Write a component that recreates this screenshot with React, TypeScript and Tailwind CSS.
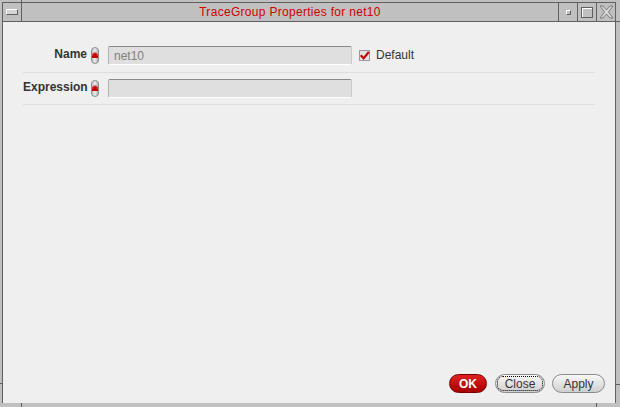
import React from "react";

const Pill = () => (
  <svg width="8" height="17" viewBox="0 0 8 17" className="shrink-0">
    <defs>
      <linearGradient id="pillg" x1="0" y1="0" x2="1" y2="0">
        <stop offset="0" stopColor="#b8b8b8" />
        <stop offset="0.5" stopColor="#ececec" />
        <stop offset="1" stopColor="#a8a8a8" />
      </linearGradient>
    </defs>
    <rect x="0.5" y="0.5" width="7" height="16" rx="3.5" fill="url(#pillg)" stroke="#8c8c8c" />
    <path d="M1 11 L1 9 A3 3.5 0 0 1 7 9 L7 11 Z" fill="#c40000" />
    <path d="M1.5 9 A2.5 3 0 0 1 6.5 9" fill="none" stroke="#ff6060" strokeWidth="0.6" />
  </svg>
);

const Field = ({ value }: { value?: string }) => (
  <div className="w-[244px] h-[19px] bg-[#dfdfdf] border-t border-t-[#8a8a8a] border-l border-l-[#b0b0b0] border-b border-b-white border-r border-r-[#c8c8c8] rounded-[2px] pl-[5px] flex items-center text-[12px] text-[#808080]">
    {value}
  </div>
);

const Row = ({ label, value, extra, cls }: { label: string; value?: string; extra?: React.ReactNode; cls: string }) => (
  <div className={`flex items-center border-b border-[#dedede] ${cls}`}>
    <div className="w-[64px] text-right font-bold text-[12px] leading-[14px] text-[#333] pb-[3px]">{label}</div>
    <div className="ml-[4px] mr-[9px] flex">
      <Pill />
    </div>
    <Field value={value} />
    {extra}
  </div>
);

export default function App() {
  return (
    <div
      className="relative w-[620px] h-[407px] bg-[#c0c0c0] pt-[2px] pl-[2px] pr-[4px] pb-[4px] flex flex-col"
      style={{ fontFamily: '"Liberation Sans", Arial, sans-serif' }}
    >
      <div className="flex-1 flex flex-col border-l border-t border-r border-[#606060]">
        {/* title bar */}
        <div className="h-[19px] flex border-b border-[#606060] bg-[#c0c0c0]">
          <div className="w-[19px] border-r border-[#606060] flex items-center justify-center">
            <div className="w-[12px] h-[6px] border-t border-l border-white border-b border-r border-b-[#606060] border-r-[#606060] bg-[#d4d4d4]" />
          </div>
          <div className="flex-1 flex items-center justify-center text-[12px] tracking-[0.3px] text-[#d00000]">
            TraceGroup Properties for net10
          </div>
          <div className="w-[19px] border-l border-[#606060] flex items-center justify-center">
            <div className="w-[5px] h-[5px] border-t border-l border-white border-b border-r border-b-[#606060] border-r-[#606060]" />
          </div>
          <div className="w-[19px] border-l border-[#606060] flex items-center justify-center">
            <div className="w-[12px] h-[11px] border border-[#606060] shadow-[inset_1px_1px_0_#ffffff]" />
          </div>
          <div className="w-[19px] border-l border-[#606060] flex items-center justify-center">
            <svg width="15" height="14" viewBox="0 0 15 14">
              <path
                d="M1 1 L4 1 L7.5 5 L11 1 L14 1 L9.5 7 L14 13 L11 13 L7.5 9 L4 13 L1 13 L5.5 7 Z"
                fill="#d8d8d8"
                stroke="#707070"
                strokeWidth="0.9"
              />
            </svg>
          </div>
        </div>

        {/* body */}
        <div className="flex-1 bg-[#efefef] flex flex-col px-[20px] pt-[24px]">
          <Row
            label="Name"
            value="net10"
            cls="pb-[7px]"
            extra={
              <div className="flex items-center ml-[7px]">
                <svg width="11" height="11" viewBox="0 0 11 11">
                  <rect x="0.5" y="0.5" width="10" height="10" fill="#e4e4e4" stroke="#9a9a9a" />
                  <path d="M1.8 5.2 L4.6 8.4 L9.8 2" fill="none" stroke="#cc0000" strokeWidth="2.2" />
                </svg>
                <span className="ml-[6px] text-[12px] leading-[14px] text-[#333] pb-[2px]">Default</span>
              </div>
            }
          />
          <Row label="Expression" cls="pt-[6px] pb-[6px]" />

          <div className="flex-1" />

          <div className="flex justify-end items-center gap-[7px] -mr-[10px] pb-[10px]">
            <button className="w-[38px] h-[19px] rounded-full border border-[#7a0000] bg-gradient-to-b from-[#e02020] to-[#a80000] text-white font-bold text-[12px] flex items-center justify-center">
              OK
            </button>
            <button className="ml-[1px] w-[50px] h-[19px] rounded-full border border-[#8a8a8a] bg-gradient-to-b from-[#f8f8f8] to-[#cfcfcf] text-[12px] text-[#333] flex items-center justify-center">
              <span className="w-[44px] h-[13px] outline-1 outline-dotted outline-black rounded-[5px] flex items-center justify-center leading-none">
                Close
              </span>
            </button>
            <button className="w-[53px] h-[19px] rounded-full border border-[#8a8a8a] bg-gradient-to-b from-[#f8f8f8] to-[#cfcfcf] text-[12px] text-[#333] flex items-center justify-center">
              Apply
            </button>
          </div>
        </div>
      </div>

      {/* frame resize ticks */}
      <div className="absolute left-0 top-[383px] w-[3px] h-px bg-[#606060]" />
      <div className="absolute left-[21px] bottom-0 w-px h-[4px] bg-[#606060]" />
      <div className="absolute left-[596px] bottom-0 w-px h-[4px] bg-[#606060]" />
      <div className="absolute right-0 top-[384px] w-[4px] h-px bg-[#606060]" />
      <div className="absolute left-[21px] top-0 w-px h-[2px] bg-[#606060]" />
      <div className="absolute right-0 top-[21px] w-[4px] h-px bg-[#606060]" />
    </div>
  );
}
